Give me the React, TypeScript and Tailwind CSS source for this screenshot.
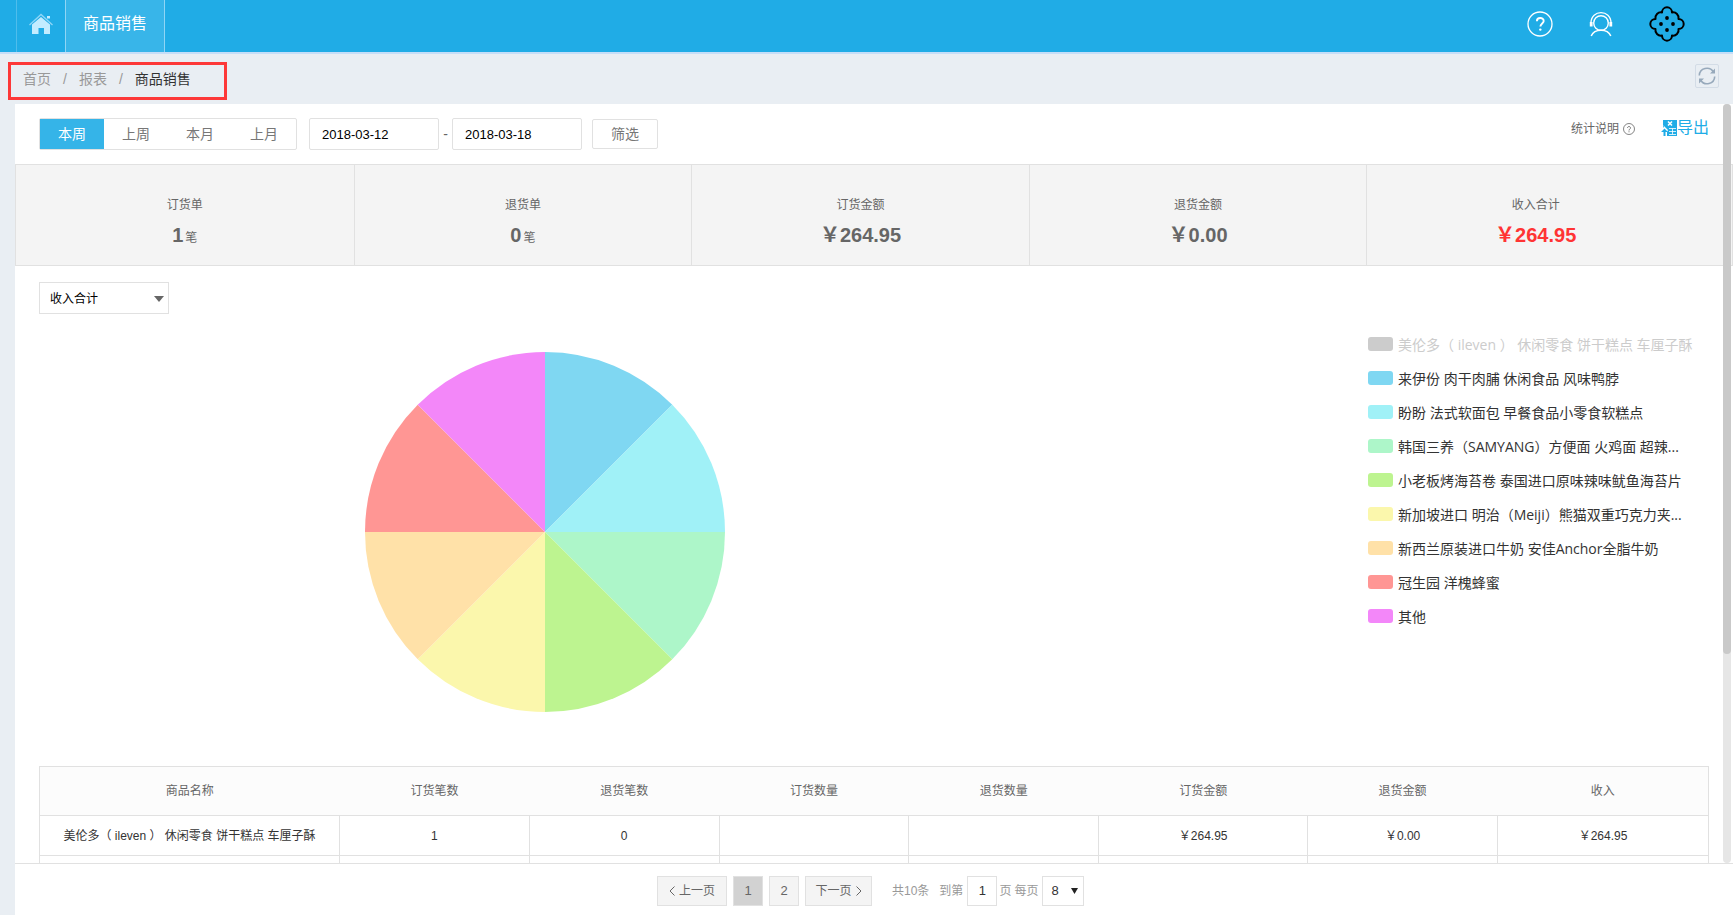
import { useState, FC } from "react";

const ranges = ["本周", "上周", "本月", "上月"];

const stats = [
  { label: "订货单", value: "1", unit: "笔" },
  { label: "退货单", value: "0", unit: "笔" },
  { label: "订货金额", value: "264.95", money: true },
  { label: "退货金额", value: "0.00", money: true },
  { label: "收入合计", value: "264.95", money: true, red: true },
];

const legend = [
  { name: "美伦多（ ileven ） 休闲零食 饼干糕点 车厘子酥", color: "#cccccc", off: true },
  { name: "来伊份 肉干肉脯 休闲食品 风味鸭脖", color: "#7fd7f2" },
  { name: "盼盼 法式软面包 早餐食品小零食软糕点", color: "#a0f1f7" },
  { name: "韩国三养（SAMYANG）方便面 火鸡面 超辣...", color: "#adf6c9" },
  { name: "小老板烤海苔卷 泰国进口原味辣味鱿鱼海苔片", color: "#bdf490" },
  { name: "新加坡进口 明治（Meiji）熊猫双重巧克力夹...", color: "#fbf7ac" },
  { name: "新西兰原装进口牛奶 安佳Anchor全脂牛奶", color: "#ffe1a8" },
  { name: "冠生园 洋槐蜂蜜", color: "#ff9694" },
  { name: "其他", color: "#f387f9" },
];

const columns = ["商品名称", "订货笔数", "退货笔数", "订货数量", "退货数量", "订货金额", "退货金额", "收入"];
const row = ["美伦多（ ileven ） 休闲零食 饼干糕点 车厘子酥", "1", "0", "", "", "￥264.95", "￥0.00", "￥264.95"];

const HomeIcon: FC = () => (
  <svg width="24" height="22" viewBox="0 0 24 22" aria-hidden="true">
    <path d="M3 11.500 12 4l9 7.500V21h-6v-6H9.500v6H3z" fill="#c3ecff" />
    <path d="M.5 12 12 1.500 23.500 12" fill="none" stroke="#8fd6f7" strokeWidth="1.300" />
    <rect x="18" y="3" width="3" height="2.500" fill="#c3ecff" />
  </svg>
);

const HelpIcon: FC = () => (
  <svg width="26" height="26" viewBox="0 0 26 26" fill="none" stroke="#fff" aria-hidden="true">
    <circle cx="13" cy="13" r="12" strokeWidth="1.300" />
    <path d="M9.900 10.200c0-4.200 6.800-4.200 6.800-.2 0 2.400-3.300 2.700-3.300 5.600" strokeWidth="1.900" />
    <circle cx="13.300" cy="18.600" r="1.200" fill="#fff" stroke="none" />
  </svg>
);

const ServiceIcon: FC = () => (
  <svg width="24" height="26" viewBox="0 0 24 26" fill="none" stroke="#fff" aria-hidden="true">
    <circle cx="12" cy="12" r="7.300" strokeWidth="1.400" />
    <path d="M2 12C2 -1.800 22 -1.800 22 12" strokeWidth="1.300" />
    <path d="M2.200 11v4.500M21.800 11v4.500" strokeWidth="2.800" />
    <path d="M2.200 25c1.500-3.500 5-5.700 9.800-5.700s8.300 2.200 9.800 5.700" strokeWidth="1.500" />
  </svg>
);

const CookieIcon: FC = () => (
  <svg width="36" height="36" viewBox="-18 -18 36 36" aria-hidden="true">
    <path
      d="M-5-11.500a5 5.200 0 0 1 10 0 5.500 5.500 0 0 1 6.500 6.500 5.200 5 0 0 1 0 10 5.500 5.500 0 0 1-6.500 6.500 5 5.200 0 0 1-10 0 5.500 5.500 0 0 1-6.500-6.500 5.200 5 0 0 1 0-10 5.500 5.500 0 0 1 6.500-6.500z"
      fill="none"
      stroke="#000"
      strokeWidth="2"
      strokeLinejoin="round"
    />
    <circle cx="0" cy="-6" r="1.900" />
    <circle cx="-6" cy="0" r="1.900" />
    <circle cx="6" cy="0" r="1.900" />
    <circle cx="0" cy="6" r="1.900" />
  </svg>
);

const RefreshIcon: FC = () => (
  <svg width="18" height="18" viewBox="0 0 18 18" fill="none" stroke="#97a9bb" strokeWidth="1.600" aria-hidden="true">
    <path d="M1.300 8.500C1.500 1 11.500-1.500 15.500 5" />
    <path d="M16.700 9.500C16.500 17 6.500 19.500 2.500 13" />
    <path d="M17 1.500v5h-5z" fill="#97a9bb" stroke="none" />
    <path d="M1 16.500v-5h5z" fill="#97a9bb" stroke="none" />
  </svg>
);

const ExportIcon: FC = () => (
  <svg width="16" height="16" viewBox="0 0 16 16" aria-hidden="true">
    <path d="M2 0h14v16H2z" fill="#20ace6" />
    <path d="M7 1.500l4 4M11 1.500l-4 4" stroke="#fff" strokeWidth="1.500" />
    <path d="M8 8.500h7M8 11.500h7M8 14.500h7M11.500 8.500v6" stroke="#fff" strokeWidth=".8" />
    <path d="M2 5l5 5-1 2v4H0V9l3-2z" fill="#fff" />
    <path d="M3.500 8.500L0 12h2.500v4h2v-4H7z" fill="#20ace6" />
  </svg>
);

// equal slices, clockwise from twelve o'clock
const Pie: FC = () => {
  const slices = legend.filter((l) => !l.off);
  const step = (Math.PI * 2) / slices.length;
  return (
    <svg className="mt-[38px] ml-[326px] shrink-0" width="360" height="360" viewBox="-180 -180 360 360" role="img" aria-label="收入合计">
      {slices.map((s, i) => {
        const a = i * step;
        const b = a + step;
        return (
          <path
            key={s.name}
            fill={s.color}
            d={`M0 0L${180 * Math.sin(a)} ${-180 * Math.cos(a)}A180 180 0 0 1 ${180 * Math.sin(b)} ${-180 * Math.cos(b)}z`}
          />
        );
      })}
    </svg>
  );
};

const App: FC = () => {
  const [range, setRange] = useState("本周");
  const [page, setPage] = useState(1);

  return (
    <div className="flex h-screen flex-col bg-[#e9eef3] font-['Liberation_Sans','Noto_Sans_CJK_SC',sans-serif] text-xs text-[#666]">
      <header className="flex h-[54px] shrink-0 items-stretch border-b-2 border-[#c5def8] bg-[#20ace6] pl-4 pr-12">
        <a href="#home" aria-label="首页" className="flex w-[50px] items-center justify-center border-x border-l-[#4fbdec] border-r-[#90d5f5] pb-1">
          <HomeIcon />
        </a>
        <a href="#sales" className="flex items-center border-r border-[#90d5f5] bg-[#38b5e9] px-[17px] pb-1 text-base text-white">
          商品销售
        </a>
        <div className="ml-auto flex items-center gap-9 pb-1">
          <button aria-label="帮助"><HelpIcon /></button>
          <button aria-label="客服"><ServiceIcon /></button>
          <button aria-label="账户"><CookieIcon /></button>
        </div>
      </header>

      <div className="flex h-[50px] shrink-0 items-start justify-between pl-2 pr-[14px]">
        <nav className="mt-2 flex h-[38px] w-[219px] items-center gap-3 border-3 border-[#fd3838] pb-1 pl-3 text-sm text-[#999]">
          <a href="#home">首页</a>
          <span>/</span>
          <a href="#report">报表</a>
          <span>/</span>
          <span className="text-[#333]">商品销售</span>
        </nav>
        <button aria-label="刷新" className="mt-[10px] flex size-6 items-center justify-center rounded-xs border border-[#d3dce6]">
          <RefreshIcon />
        </button>
      </div>

      <div className="relative ml-[15px] flex min-h-0 flex-1 flex-col bg-white">
        <main className="min-h-0 flex-1 overflow-y-auto [scrollbar-width:none]">
          <div className="flex h-[60px] items-center px-6">
            <div className="flex h-8 rounded-xs border border-[#e1e1e1] text-sm">
              {ranges.map((r) => (
                <button
                  key={r}
                  onClick={() => setRange(r)}
                  className={r === range ? "w-16 bg-[#35b4e8] text-white" : "w-16 text-[#777]"}
                >
                  {r}
                </button>
              ))}
            </div>
            <input
              aria-label="开始日期"
              defaultValue="2018-03-12"
              className="ml-3 h-8 w-[130px] rounded-xs border border-[#e1e1e1] px-3 text-[13px] text-black"
            />
            <span className="w-[13px] text-center text-sm">-</span>
            <input
              aria-label="结束日期"
              defaultValue="2018-03-18"
              className="h-8 w-[130px] rounded-xs border border-[#e1e1e1] px-3 text-[13px] text-black"
            />
            <button className="ml-[10px] h-[30px] w-[66px] rounded-xs border border-[#e1e1e1] text-sm text-[#777]">筛选</button>
            <div className="ml-auto flex items-center gap-[26px] pb-[10px]">
              <a href="#explain" className="flex items-center gap-1">
                统计说明
                <svg width="12" height="12" viewBox="0 0 12 12" fill="none" stroke="#666" aria-hidden="true">
                  <circle cx="6" cy="6" r="5.500" strokeWidth=".8" />
                  <path d="M4.500 5c0-2 3-2 3 0 0 1-1.500 1.200-1.500 2.500M6 8.300v1" strokeWidth=".9" />
                </svg>
              </a>
              <button className="flex items-center pb-[2px] text-base text-[#20ace6]">
                <ExportIcon />
                导出
              </button>
            </div>
          </div>

          <section className="flex h-[102px] border border-[#e1e1e1] bg-[#f4f4f4] pr-7">
            {stats.map((s, i) => (
              <div
                key={s.label}
                className={
                  i === 0
                    ? "flex flex-1 basis-px flex-col items-center pt-[30px]"
                    : "flex flex-1 flex-col items-center border-l border-[#e1e1e1] pt-[30px]"
                }
              >
                <p className="leading-5">{s.label}</p>
                <p className={s.red ? "mt-2 leading-6 text-[#ff3434]" : "mt-2 leading-6"}>
                  <b className="text-xl leading-6">{s.money ? "￥" + s.value : s.value}</b>
                  {s.unit && <span className="ml-[2px]">{s.unit}</span>}
                </p>
              </div>
            ))}
          </section>

          <div className="px-6 pt-4">
            <div className="relative w-[130px]">
              <select
                aria-label="统计类型"
                className="block h-8 w-full appearance-none border border-[#e1e1e1] bg-white pl-[10px] pt-[2px] text-xs text-black"
              >
                <option>收入合计</option>
              </select>
              <svg className="pointer-events-none absolute right-[5px] top-[14px]" width="10" height="6" viewBox="0 0 10 6" aria-hidden="true">
                <path d="M0 0h10L5 6z" fill="#666" />
              </svg>
            </div>

            <section className="flex justify-between pb-[54px]">
              <Pie />
              <ul className="w-[341px] pt-[13px] font-['Open_Sans','Noto_Sans_CJK_SC',sans-serif] text-sm text-[#333]">
                {legend.map((l) => (
                  <li
                    key={l.name}
                    className={
                      l.off
                        ? "flex h-[34px] items-center gap-[5px] whitespace-nowrap text-[#ccc]"
                        : "flex h-[34px] items-center gap-[5px] whitespace-nowrap"
                    }
                  >
                    <span className="h-[14px] w-[25px] shrink-0 rounded-[3px]" style={{ backgroundColor: l.color }} />
                    <span className="pt-[2px]">{l.name}</span>
                  </li>
                ))}
              </ul>
            </section>

            <table className="w-full table-fixed border-collapse border border-[#e1e1e1] text-center">
              <colgroup>
                <col className="w-[300px]" />
                <col />
                <col />
                <col />
                <col />
                <col className="w-[209px]" />
                <col />
                <col className="w-[211px]" />
              </colgroup>
              <thead>
                <tr className="h-[49px] bg-[#fcfcfc]">
                  {columns.map((c) => (
                    <th key={c} className="font-normal">{c}</th>
                  ))}
                </tr>
              </thead>
              <tbody className="text-[#333]">
                <tr className="h-10">
                  {row.map((cell, i) => (
                    <td key={i} className="border border-[#e1e1e1]">{cell}</td>
                  ))}
                </tr>
                <tr className="h-10">
                  {columns.map((c) => (
                    <td key={c} className="border border-[#e1e1e1]" />
                  ))}
                </tr>
              </tbody>
            </table>
          </div>
        </main>

        <div className="absolute right-[2px] top-0 bottom-[52px] w-2 rounded-sm bg-[#e6e6e6]">
          <div className="h-[72.5%] rounded-sm bg-[#c9c9c9]" />
        </div>

        <footer className="flex h-[52px] shrink-0 items-center border-t border-[#e1e1e1] pl-[642px] pt-[2px] text-[#999]">
          <button className="flex h-[30px] w-[70px] items-center justify-center gap-1 border border-[#e1e1e1] bg-[#f4f4f4] text-[#666]">
            <svg width="6" height="10" viewBox="0 0 6 10" fill="none" stroke="#666" aria-hidden="true">
              <path d="M5.500.5L1 5l4.500 4.500" />
            </svg>
            上一页
          </button>
          {[1, 2].map((n) => (
            <button
              key={n}
              onClick={() => setPage(n)}
              className={
                n === page
                  ? "ml-[6px] size-[30px] border border-[#e1e1e1] bg-[#d2d2d2] text-[13px] text-[#666]"
                  : "ml-[6px] size-[30px] border border-[#e1e1e1] bg-[#f4f4f4] text-[13px] text-[#666]"
              }
            >
              {n}
            </button>
          ))}
          <button className="ml-[6px] flex h-[30px] w-[67px] items-center justify-center gap-1 border border-[#e1e1e1] bg-[#f4f4f4] text-[#666]">
            下一页
            <svg width="6" height="10" viewBox="0 0 6 10" fill="none" stroke="#666" aria-hidden="true">
              <path d="M.5.5L5 5 .5 9.500" />
            </svg>
          </button>
          <span className="ml-5">共10条</span>
          <label htmlFor="page" className="ml-[10px]">到第</label>
          <input
            id="page"
            defaultValue="1"
            className="ml-1 mr-[2px] size-[30px] border border-[#e1e1e1] text-center text-[13px] text-[#333]"
          />
          <span>页</span>
          <label htmlFor="size" className="ml-[3px]">每页</label>
          <div className="relative ml-1">
            <select
              id="size"
              className="block h-[30px] w-[42px] appearance-none border border-[#e1e1e1] bg-white pl-2 text-[13px] text-[#333]"
            >
              <option>8</option>
            </select>
            <svg className="pointer-events-none absolute right-[6px] top-3" width="7" height="6" viewBox="0 0 7 6" aria-hidden="true">
              <path d="M0 0h7L3.500 6z" fill="#222" />
            </svg>
          </div>
        </footer>
      </div>
    </div>
  );
};

export default App;
